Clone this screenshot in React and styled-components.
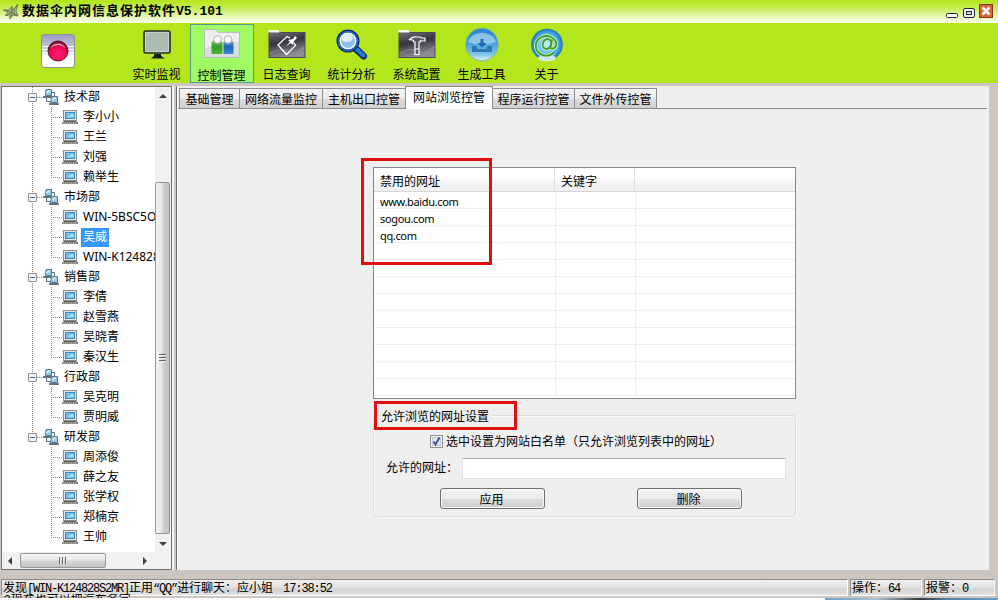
import styled, { createGlobalStyle, css } from "styled-components";

const departments = [
  { name: "技术部", members: ["李小小", "王兰", "刘强", "赖举生"] },
  { name: "市场部", members: ["WIN-5BSC5O7", "吴威", "WIN-K124828"] },
  { name: "销售部", members: ["李倩", "赵雪燕", "吴晓青", "秦汉生"] },
  { name: "行政部", members: ["吴克明", "贾明威"] },
  { name: "研发部", members: ["周添俊", "薛之友", "张学权", "郑楠京", "王帅"] },
];

const tools = [
  { label: "实时监视", Icon: MonitorIcon },
  { label: "控制管理", Icon: UsersFolderIcon, selected: true },
  { label: "日志查询", Icon: LogFolderIcon },
  { label: "统计分析", Icon: SearchIcon },
  { label: "系统配置", Icon: HammerFolderIcon },
  { label: "生成工具", Icon: DownloadIcon },
  { label: "关于", Icon: AboutIcon },
];

const tabs = [
  { label: "基础管理", width: 61 },
  { label: "网络流量监控", width: 84 },
  { label: "主机出口控管", width: 84 },
  { label: "网站浏览控管", width: 88, active: true },
  { label: "程序运行控管", width: 83 },
  { label: "文件外传控管", width: 83 },
];

const sites = ["www.baidu.com", "sogou.com", "qq.com"];
const rowCount = 12;

function App() {
  return (
    <Window>
      <GlobalStyle />
      <TitleBar>
        <LeafIcon />
        <Title>
          数据伞内网信息保护软件<TitleVersion>V5.101</TitleVersion>
        </Title>
        <WindowButtons />
      </TitleBar>
      <Toolbar>
        <RecordSlot>
          <RecordIcon />
        </RecordSlot>
        {tools.map(({ label, Icon, selected }) => (
          <ToolButton key={label} $selected={selected}>
            <Icon />
            <ToolLabel $selected={selected}>{label}</ToolLabel>
          </ToolButton>
        ))}
      </Toolbar>
      <Main>
        <TreePanel>
          <TreeTop>
            <TreeList>
              {departments.map((dept, i) => (
                <Department key={dept.name} dept={dept} last={i === departments.length - 1} />
              ))}
            </TreeList>
            <VScroll>
              <ArrowSlot>
                <Arrow $dir="up" />
              </ArrowSlot>
              <VTrack>
                <VThumb>
                  <VGrip />
                </VThumb>
              </VTrack>
              <ArrowSlot>
                <Arrow $dir="down" />
              </ArrowSlot>
            </VScroll>
          </TreeTop>
          <HScroll>
            <ArrowSlot>
              <Arrow $dir="left" />
            </ArrowSlot>
            <HTrack>
              <HThumb>
                <HGrip />
              </HThumb>
            </HTrack>
            <ArrowSlot>
              <Arrow $dir="right" />
            </ArrowSlot>
            <ScrollCorner />
          </HScroll>
        </TreePanel>
        <Splitter />
        <Content>
          <TabStrip>
            {tabs.map((tab) => (
              <Tab key={tab.label} $active={tab.active} $width={tab.width}>
                {tab.label}
              </Tab>
            ))}
          </TabStrip>
          <Page>
            <SiteList>
              <ListHeader>
                <HeaderCell>禁用的网址</HeaderCell>
                <HeaderCell>关键字</HeaderCell>
                <HeaderCell />
              </ListHeader>
              {Array.from({ length: rowCount }, (_, i) => (
                <ListRow key={i}>
                  <ListCell>{sites[i]}</ListCell>
                  <ListCell />
                  <ListCell />
                </ListRow>
              ))}
              <ListMark />
            </SiteList>
            <Group>
              <GroupHead>
                <GroupTitle>允许浏览的网址设置</GroupTitle>
                <GroupMark />
              </GroupHead>
              <CheckRow>
                <CheckIcon />
                <CheckLabel>选中设置为网站白名单（只允许浏览列表中的网址）</CheckLabel>
              </CheckRow>
              <InputRow>
                <InputLabel>允许的网址：</InputLabel>
                <TextInput />
              </InputRow>
              <ButtonRow>
                <Button>应用</Button>
                <Button>删除</Button>
              </ButtonRow>
            </Group>
          </Page>
        </Content>
      </Main>
      <StatusBar>
        <StatusCell $grow>
          发现<Half>[WIN-K124828S2MR]</Half>正用<Half>“QQ”</Half>进行聊天：应小姐
          <StatusTime>17:38:52</StatusTime>
        </StatusCell>
        <StatusCell $width={72}>
          操作：<Half>64</Half>
        </StatusCell>
        <StatusCell $width={71}>
          报警：<Half>0</Half>
        </StatusCell>
      </StatusBar>
      <BottomEdge>
        <GhostText>2现在也可以把汽车名字</GhostText>
        <DesktopSliver />
      </BottomEdge>
    </Window>
  );
}

function Department({ dept, last }) {
  return (
    <>
      <DeptRow $last={last}>
        <Expander />
        <DeptDots />
        <NetworkIcon />
        <NodeLabel>{dept.name}</NodeLabel>
      </DeptRow>
      {dept.members.map((name, i) => (
        <MemberRow key={name} $trunk={!last} $end={i === dept.members.length - 1}>
          <MemberDots />
          <ComputerIcon />
          <NodeLabel $selected={name === "吴威"}>{name}</NodeLabel>
        </MemberRow>
      ))}
    </>
  );
}

/* Icons */

function LeafIcon() {
  return (
    <svg width="18" height="18" viewBox="0 0 18 18" fill="none" stroke="#6b7a52" strokeWidth="0.9">
      <path d="M1 8 L7 8 L10 4 L11 8 L16 2 L14 9 L16 14 L11 13 L8 17 L7 12 L3 14 L6 10 Z" fill="#a9b889" />
      <path d="M3 8 L15 13 M15 4 L5 14 M10 5 L9 15 M12 7V13" stroke="#68764f" />
    </svg>
  );
}

function WindowButtons() {
  return (
    <svg width="50" height="19" viewBox="0 0 50 19">
      <rect x="1.5" y="13.5" width="11" height="4" rx="1" fill="#fff" stroke="#23233a" />
      <rect x="18.5" y="8.5" width="11" height="9" rx="1.5" fill="#f4f3fa" stroke="#23233a" />
      <rect x="21.5" y="11.5" width="5" height="3" fill="#d8d6e6" stroke="#23233a" />
      <rect x="34.5" y="4.5" width="13" height="13" fill="#d3633b" stroke="#8a3218" />
      <path d="M37.5 7.5 L44.5 14.5 M44.5 7.5 L37.5 14.5" stroke="#fff" strokeWidth="2.6" />
    </svg>
  );
}

function RecordIcon() {
  return (
    <svg width="34" height="34" viewBox="0 0 34 34">
      <defs>
        <linearGradient id="recBg" x1="0" y1="0" x2="0" y2="1">
          <stop offset="0" stopColor="#9a9ac4" />
          <stop offset="0.5" stopColor="#d0d0e6" />
          <stop offset="0.64" stopColor="#fff" />
        </linearGradient>
        <radialGradient id="recDot" cx="0.5" cy="0.7" r="0.6">
          <stop offset="0" stopColor="#ff1a78" />
          <stop offset="0.7" stopColor="#ee0a55" />
          <stop offset="1" stopColor="#8a0c2c" />
        </radialGradient>
      </defs>
      <rect x="0.5" y="0.5" width="33" height="33" rx="3" fill="url(#recBg)" stroke="#8f8f8f" />
      <path d="M1 12.5H33M1 15.5H33M1 18.5H33" stroke="#fff" />
      <circle cx="17" cy="17" r="10" fill="url(#recDot)" stroke="#5a1426" />
      <path d="M9.5 14 A8.5 8.5 0 0 1 24.5 14 Q17 8 9.5 14Z" fill="#fff" opacity="0.6" />
    </svg>
  );
}

function MonitorIcon() {
  return (
    <svg width="36" height="36" viewBox="0 0 36 36">
      <rect x="5" y="3" width="26" height="22" rx="1.5" fill="#a9bdb0" stroke="#292e2b" strokeWidth="1.6" />
      <rect x="6.5" y="4.5" width="23" height="19" fill="none" stroke="#c5d3c8" />
      <path d="M15 26H22V28L26 30.5H12L15 28Z" fill="#151a12" />
    </svg>
  );
}

function UsersFolderIcon() {
  return (
    <svg width="40" height="36" viewBox="0 0 40 36">
      <defs>
        <linearGradient id="greenBody" x1="0" y1="0" x2="0" y2="1">
          <stop offset="0" stopColor="#8ed06c" />
          <stop offset="0.5" stopColor="#2f9f22" />
          <stop offset="1" stopColor="#45b531" />
        </linearGradient>
        <linearGradient id="blueBody" x1="0" y1="0" x2="0" y2="1">
          <stop offset="0" stopColor="#8db8e4" />
          <stop offset="0.5" stopColor="#1e62b8" />
          <stop offset="1" stopColor="#3a8be0" />
        </linearGradient>
      </defs>
      <path d="M2.5 1.5H14L16 4.5H37.5V29.5H2.5Z" fill="#d9dddc" stroke="#b8bdba" />
      <path d="M3 2H13.5L15.500 5H37V14Q20 14 3 20Z" fill="#f2f3f3" opacity="0.8" />
      <path d="M9.500 14Q15.500 9 20.500 14V26H9.500Z" fill="url(#greenBody)" />
      <path d="M21.500 14Q26.500 9 31.500 14V26H21.500Z" fill="url(#blueBody)" />
      <circle cx="15.500" cy="11.500" r="3.800" fill="#f7f7f4" stroke="#b4b4ae" />
      <circle cx="26" cy="11.500" r="3.800" fill="#f7f7f4" stroke="#b4b4ae" />
    </svg>
  );
}

function DarkFolder({ children }) {
  return (
    <svg width="38" height="36" viewBox="0 0 38 36">
      <defs>
        <linearGradient id="darkFolder" x1="0" y1="0" x2="0.3" y2="1">
          <stop offset="0" stopColor="#72737c" />
          <stop offset="0.45" stopColor="#34353e" />
          <stop offset="1" stopColor="#8b8c94" />
        </linearGradient>
      </defs>
      <rect x="1" y="4.5" width="36" height="25" fill="url(#darkFolder)" stroke="#4c4d50" />
      <path d="M1.5 25Q13 18 20 23T36.5 17V20Q27 28 19 24T1.5 27Z" fill="#b0b1b8" opacity="0.35" />
      <path d="M0.5 2H10.500L11.500 4.500H0.500Z" fill="#fff" />
      {children}
    </svg>
  );
}

function LogFolderIcon() {
  return (
    <DarkFolder>
      <path d="M22 10L19 8.5 10 17 18.5 26.5 27.5 17.5 26 15" fill="none" stroke="#fff" strokeWidth="1.3" />
      <path d="M18 18L22 14 20 12 25 11 27 8 29 10 26 13 25 17 23 15Z" fill="#fff" />
    </DarkFolder>
  );
}

function HammerFolderIcon() {
  return (
    <DarkFolder>
      <path
        d="M11 12Q14 8.5 18 9H22L24 10H27V13H24L22.5 12.5V14H21V26.5H17V14H15.5V12.5Q13.5 11 11 12Z"
        fill="#565761"
        stroke="#fff"
        strokeWidth="1.2"
      />
      <path d="M17 21H21" stroke="#fff" />
    </DarkFolder>
  );
}

function SearchIcon() {
  return (
    <svg width="36" height="36" viewBox="0 0 36 36">
      <path d="M21 20L29.5 28" stroke="#0d2c70" strokeWidth="7" strokeLinecap="round" />
      <path d="M22 20.5L29.5 27.5" stroke="#2f79d6" strokeWidth="4" strokeLinecap="round" />
      <circle cx="14" cy="13" r="10" fill="#a9cdf1" stroke="#0c2b6b" strokeWidth="3" />
      <circle cx="14" cy="13" r="9.5" fill="none" stroke="#2b6cc0" strokeWidth="1.6" />
      <circle cx="14" cy="13" r="7.7" fill="#8fc0ef" stroke="#fff" strokeWidth="1.3" />
      <ellipse cx="13" cy="10" rx="5.8" ry="4" fill="#e4effb" />
    </svg>
  );
}

function DownloadIcon() {
  return (
    <svg width="36" height="36" viewBox="0 0 36 36">
      <defs>
        <linearGradient id="dlBall" x1="0" y1="0" x2="0" y2="1">
          <stop offset="0" stopColor="#2685cf" />
          <stop offset="0.5" stopColor="#4ea3dc" />
          <stop offset="0.8" stopColor="#7cc5ea" />
          <stop offset="1" stopColor="#e4f8fb" />
        </linearGradient>
      </defs>
      <circle cx="18" cy="16.5" r="16.3" fill="url(#dlBall)" stroke="#79aab8" strokeWidth="0.8" />
      <path d="M4 14A14.5 12.5 0 0 1 32 14Q18 19 4 14Z" fill="#b9dcf3" opacity="0.65" />
      <path d="M16.5 11H19.5V15H22.500L18 19.500 13.500 15H16.500Z" fill="#236ba8" />
      <path d="M8 18H12L14 21H22L24 18H28V24H8Z" fill="#2d78b4" />
    </svg>
  );
}

function AboutIcon() {
  return (
    <svg width="36" height="36" viewBox="0 0 36 36">
      <defs>
        <radialGradient id="aboutBall" cx="0.5" cy="0.5" r="0.52">
          <stop offset="0" stopColor="#bdeeff" />
          <stop offset="0.65" stopColor="#58b8ec" />
          <stop offset="1" stopColor="#1469b7" />
        </radialGradient>
      </defs>
      <circle cx="18" cy="16.5" r="15.8" fill="url(#aboutBall)" />
      <ellipse cx="18" cy="30" rx="9" ry="3.2" fill="#e4f6ff" opacity="0.85" />
      <g fill="none" stroke="#d8f3c4" strokeWidth="3.4">
        <path d="M25 24.5A10.500 9.800 0 1 1 27.500 15.500Q27 20.500 23.500 20.500T22 17L23 11.500" />
        <ellipse cx="18" cy="16" rx="4.200" ry="5" transform="rotate(20 18 16)" />
      </g>
      <g fill="none" stroke="#3f9c35" strokeWidth="1.900">
        <path d="M25 24.5A10.500 9.800 0 1 1 27.500 15.500Q27 20.500 23.500 20.500T22 17L23 11.500" />
        <ellipse cx="18" cy="16" rx="4.200" ry="5" transform="rotate(20 18 16)" />
      </g>
    </svg>
  );
}

function NetworkIcon() {
  return (
    <svg width="16" height="16" viewBox="0 0 16 16">
      <path d="M9 3.5H11.500V7M3.500 9V12.500H7" fill="none" stroke="#5c6973" />
      <path d="M3 0.500H8.500V6.500H2.500Z" fill="#8fcbf3" stroke="#5d7888" />
      <path d="M0.500 7.500H8.500V8.500H0.500Z" fill="#8a979e" stroke="#4d5a62" strokeWidth="0.800" />
      <path d="M8.500 7.500H14.500V13.500H7.500Z" fill="#8fcbf3" stroke="#5d7888" />
      <path d="M6.500 14.500H15.500V15.500H6.500Z" fill="#8a979e" stroke="#4d5a62" strokeWidth="0.800" />
      <path d="M3.500 4L6.500 1.500M9.500 11L12.500 8.500" stroke="#e3f4fd" strokeWidth="1.500" />
    </svg>
  );
}

function ComputerIcon() {
  return (
    <svg width="16" height="16" viewBox="0 0 16 16">
      <rect x="1.5" y="1.5" width="13" height="10" fill="#e8e6e2" stroke="#8b8f92" />
      <rect x="3.5" y="3.5" width="9" height="6" fill="#6cbdf2" stroke="#3d88bd" />
      <path d="M5 8.500L9 5H12V8Z" fill="#93e0f0" />
      <path d="M1.500 12.500H14.500" stroke="#5d5d5d" />
      <path d="M0 14H16" stroke="#767676" strokeWidth="2" />
      <path d="M1 13.500H15M0.500 14.500H15" stroke="#d0d0d0" strokeWidth="0.700" strokeDasharray="1 1" />
    </svg>
  );
}

function CheckIcon() {
  return (
    <svg width="13" height="13" viewBox="0 0 13 13">
      <rect x="0.5" y="0.5" width="12" height="12" fill="#f6f6f6" stroke="#8b8f93" />
      <rect x="2.5" y="2.5" width="8" height="8" fill="#dfe5ee" stroke="#c2c9d4" />
      <path d="M3.5 6.5L5.5 9.5 9.5 2.5" fill="none" stroke="#3f4f96" strokeWidth="1.9" />
    </svg>
  );
}

export default App;

const GlobalStyle = createGlobalStyle`
  * {
    box-sizing: border-box;
  }

  body {
    margin: 0;
    overflow: hidden;
    font-family: "Liberation Sans", "Noto Sans CJK SC", sans-serif;
    font-size: 12px;
    line-height: 16px;
    color: #000;
  }

  svg {
    display: block;
    flex: none;
  }
`;

const Window = styled.div`
  width: 998px;
  height: 600px;
  display: flex;
  flex-direction: column;
  overflow: hidden;
  background: #ccc5c0;
`;

const TitleBar = styled.header`
  height: 23px;
  display: flex;
  align-items: flex-start;
  padding: 0 3px 0 2px;
  background: linear-gradient(#b2e617, #c5ee4f 35%, #eefaca 80%, #f8fde8);

  > svg:first-child {
    margin-top: 2px;
  }
`;

const Title = styled.h1`
  flex: 1;
  margin: 0 0 0 2px;
  font-size: 13px;
  line-height: 21px;
  font-weight: bold;
  letter-spacing: 1px;
  white-space: nowrap;
`;

const TitleVersion = styled.span`
  font-family: "Liberation Mono", monospace;
  letter-spacing: 0;
`;

const Toolbar = styled.nav`
  height: 60px;
  display: flex;
  gap: 1px;
  padding-top: 1px;
  background: #b4e61d;
`;

const RecordSlot = styled.div`
  width: 124px;
  padding: 10px 0 0 41px;
`;

const ToolButton = styled.div`
  width: 64px;
  height: 59px;
  display: flex;
  flex-direction: column;
  align-items: center;
  border: 1px solid ${(props) => (props.$selected ? "#5a9a8c" : "transparent")};
  background: ${(props) => (props.$selected ? "#a0fa64" : "none")};
  padding-top: 3px;
`;

const ToolLabel = styled.span`
  margin: ${(props) => (props.$selected ? "4px" : "3px")} 1px 0 0;
  line-height: 16px;
`;

const Main = styled.main`
  flex: none;
  height: 487px;
  display: flex;
  padding: 3px 9px 0 1px;
  background: #ccc5c0;
`;

/* Tree */

const TreePanel = styled.aside`
  width: 171px;
  display: flex;
  flex-direction: column;
  border: 1px solid #707070;
  background: #fff;
`;

const TreeTop = styled.div`
  flex: 1;
  min-height: 0;
  display: flex;
`;

const TreeList = styled.div`
  width: 153px;
  overflow: hidden;
`;

const dots = "repeating-linear-gradient(#8a8a8a 0 1px, transparent 1px 2px)";

const rowBase = css`
  height: 20px;
  display: flex;
  align-items: center;
  background-repeat: no-repeat;
`;

const DeptRow = styled.div`
  ${rowBase}
  padding-left: 26px;
  background-image: ${dots};
  background-size: 1px ${(props) => (props.$last ? "50%" : "100%")};
  background-position: 30px 0;
`;

const MemberRow = styled.div`
  ${rowBase}
  padding-left: 49px;
  background-image: ${dots}, ${dots};
  background-size: 1px ${(props) => (props.$end ? "10px" : "100%")}, 1px ${(props) => (props.$trunk ? "100%" : "0")};
  background-position: 49px 0, 30px 0;
`;

const Expander = styled.span`
  width: 9px;
  height: 9px;
  flex: none;
  border: 1px solid #919191;
  border-radius: 1px;
  background: linear-gradient(#4b63a7, #4b63a7) center / 5px 1px no-repeat, #f3f3f3;
`;

const DeptDots = styled.span`
  width: 6px;
  height: 1px;
  flex: none;
  background: repeating-linear-gradient(to right, #8a8a8a 0 1px, transparent 1px 2px);
`;

const MemberDots = styled(DeptDots)`
  width: 11px;
`;

const NodeLabel = styled.span`
  height: 19px;
  flex: none;
  margin-left: 3px;
  padding: 0 2px;
  font-family: "Noto Sans", "Noto Sans CJK SC", sans-serif;
  line-height: 18px;
  white-space: nowrap;
  color: ${(props) => (props.$selected ? "#fff" : "#000")};
  background: ${(props) => (props.$selected ? "#3399ff" : "none")};
`;

const VScroll = styled.div`
  width: 16px;
  display: flex;
  flex-direction: column;
  background: #f1f1f1;
`;

const ArrowSlot = styled.span`
  width: 16px;
  height: 17px;
  display: flex;
  align-items: center;
  justify-content: center;
`;

const arrowShapes = {
  up: "border-width: 0 4px 4px; border-bottom-color: #404040;",
  down: "border-width: 4px 4px 0; border-top-color: #404040;",
  left: "border-width: 4px 4px 4px 0; border-right-color: #404040;",
  right: "border-width: 4px 0 4px 4px; border-left-color: #404040;",
};

const Arrow = styled.i`
  border: 0 solid transparent;
  ${(props) => arrowShapes[props.$dir]}
`;

const VTrack = styled.div`
  flex: 1;
  padding-top: 78px;
`;

const VThumb = styled.div`
  width: 15px;
  height: 352px;
  display: flex;
  align-items: center;
  justify-content: center;
  border: 1px solid #979797;
  border-radius: 2px;
  background: linear-gradient(to right, #f5f5f5, #e6e6e6 45%, #cfcfcf 55%, #c0c0c4);
`;

const VGrip = styled.i`
  width: 7px;
  height: 8px;
  background: repeating-linear-gradient(#666 0 1px, #eee 1px 2px, transparent 2px 3px);
`;

const HScroll = styled.div`
  height: 17px;
  display: flex;
  background: #f1f1f1;
`;

const HTrack = styled.div`
  width: 119px;
  padding-left: 2px;
`;

const HThumb = styled.div`
  width: 86px;
  height: 15px;
  margin-top: 1px;
  display: flex;
  align-items: center;
  justify-content: center;
  border: 1px solid #979797;
  border-radius: 2px;
  background: linear-gradient(#f5f5f5, #e8e8e8 45%, #d4d4d4 55%, #c4c4c8);
`;

const HGrip = styled.i`
  width: 8px;
  height: 7px;
  background: repeating-linear-gradient(to right, #666 0 1px, #eee 1px 2px, transparent 2px 3px);
`;

const ScrollCorner = styled.span`
  flex: 1;
  background: #f0f0f0;
`;

const Splitter = styled.div`
  width: 5px;
  border-left: 2px solid #f6f4f2;
  border-right: 1px solid #6f6d6c;
  background: #ccc8c4;
`;

/* Tabs and page */

const Content = styled.section`
  flex: 1;
  display: flex;
  flex-direction: column;
  background: #efefef;
  border-left: 1px solid #fff;
`;

const TabStrip = styled.div`
  height: 23px;
  display: flex;
  align-items: flex-end;
  padding-left: 1px;
  margin-right: 2px;
  border-bottom: 1px solid #8b8c92;
`;

const Tab = styled.div`
  width: ${(props) => props.$width}px;
  height: ${(props) => (props.$active ? 23 : 20)}px;
  margin-bottom: ${(props) => (props.$active ? "-1px" : "0")};
  flex: none;
  border: 1px solid #8b8c92;
  border-width: 1px 1px 0;
  margin-right: -1px;
  text-align: center;
  line-height: ${(props) => (props.$active ? 23 : 22)}px;
  white-space: nowrap;
  background: ${(props) => (props.$active ? "#fff" : "linear-gradient(#f3f3f3, #ebebeb 50%, #dcdcdc 51%, #d0d0d0)")};
`;

const Page = styled.div`
  flex: 1;
  display: flex;
  flex-direction: column;
  padding: 58px 0 0 195px;
`;

const SiteList = styled.div`
  position: relative;
  width: 423px;
  height: 232px;
  flex: none;
  border: 1px solid #828790;
  background: #fff;
`;

const columns = css`
  display: grid;
  grid-template-columns: 181px 80px 1fr;
`;

const ListHeader = styled.div`
  ${columns}
  height: 24px;
  border-bottom: 1px solid #d5d5d5;
  background: linear-gradient(#fff 40%, #f4f5f6 60%, #eff0f2);
`;

const HeaderCell = styled.div`
  height: 23px;
  padding-left: 6px;
  border-right: 1px solid #dfe1e4;
  line-height: 28px;

  &:last-child {
    border-right: 0;
  }
`;

const ListRow = styled.div`
  ${columns}
  height: 17px;
  margin-left: 1px;
  border-bottom: 1px solid #ededed;
`;

const ListCell = styled.div`
  height: 16px;
  padding-left: 5px;
  border-right: 1px solid #ededed;
  font-family: "Noto Sans", sans-serif;
  font-size: 11px;
  letter-spacing: -0.35px;
  line-height: 19px;

  &:last-child {
    border-right: 0;
  }
`;

/* red highlight frames drawn over the page */
const Mark = styled.span`
  position: absolute;
  border: 3px solid #e11010;
`;

const ListMark = styled(Mark)`
  left: -13px;
  top: -10px;
  width: 131px;
  height: 107px;
`;

const Group = styled.section`
  width: 423px;
  height: 102px;
  margin-top: 16px;
  border: 1px solid #d8dde2;
  border-radius: 3px;
  box-shadow: inset 1px 1px #fafafa, 1px 1px #fafafa;
`;

const GroupHead = styled.div`
  position: relative;
  height: 14px;
  margin-top: -9px;
  display: flex;
  padding-left: 4px;
`;

const GroupTitle = styled.span`
  padding: 0 3px;
  height: 18px;
  line-height: 20px;
  background: #efefef;
`;

const GroupMark = styled(Mark)`
  left: 0;
  top: -6px;
  width: 143px;
  height: 29px;
`;

const CheckRow = styled.div`
  display: flex;
  align-items: center;
  gap: 3px;
  height: 16px;
  margin: 12px 0 0 56px;
`;

const CheckLabel = styled.label`
  padding-top: 2px;
  white-space: nowrap;
`;

const InputRow = styled.div`
  display: flex;
  align-items: center;
  margin-top: 9px;
  padding-left: 12px;
`;

const InputLabel = styled.label`
  width: 76px;
  padding-bottom: 2px;
  white-space: nowrap;
`;

const TextInput = styled.input`
  width: 324px;
  height: 21px;
  padding: 0 3px;
  border: 1px solid #e2e3ea;
  border-top-color: #abadb3;
  background: #fff;
  outline: none;
`;

const ButtonRow = styled.div`
  display: flex;
  gap: 92px;
  margin-top: 9px;
  padding-left: 66px;
`;

const Button = styled.button`
  width: 105px;
  height: 21px;
  padding: 2px 2px 0 0;
  border: 1px solid #707070;
  border-radius: 3px;
  box-shadow: inset 0 0 0 1px #f8f8f8;
  background: linear-gradient(#f2f2f2, #ebebeb 50%, #dddddd 51%, #cfcfcf);
  font: inherit;
  line-height: 16px;
  color: #000;
`;

/* Status bar */

const StatusBar = styled.footer`
  height: 26px;
  flex: none;
  display: flex;
  gap: 2px;
  padding: 9px 3px 0 1px;
`;

const StatusCell = styled.div`
  flex: ${(props) => (props.$grow ? "1" : "none")};
  width: ${(props) => props.$width}px;
  height: 17px;
  padding: 0 1px;
  border: 1px solid #8e8b88;
  border-right-color: #fff;
  border-bottom-color: #fff;
  background: linear-gradient(#efefef, #e4e4e4 45%, #d3d3d3 60%, #e2e2e2);
  line-height: 16px;
  white-space: nowrap;
`;

/* half-width glyphs, 6px each */
const Half = styled.span`
  font-family: "Liberation Mono", monospace;
  letter-spacing: -1.2px;
`;

const StatusTime = styled(Half)`
  margin-left: 10px;
  letter-spacing: -1.1px;
`;

const BottomEdge = styled.div`
  height: 4px;
  flex: none;
  display: flex;
  justify-content: space-between;
  border-top: 2px solid #ccc5c0;
  background: #fff;
`;

const GhostText = styled.span`
  height: 4px;
  margin: -4px 0 0 4px;
  overflow: hidden;
  line-height: 12px;
  white-space: nowrap;
`;

const DesktopSliver = styled.span`
  width: 173px;
  height: 2px;
  background: linear-gradient(to right, #6d9cc4, #a8c4d8 30%, #33373c 55%, #4d80a8 70%, #6ba2cc);
`;
